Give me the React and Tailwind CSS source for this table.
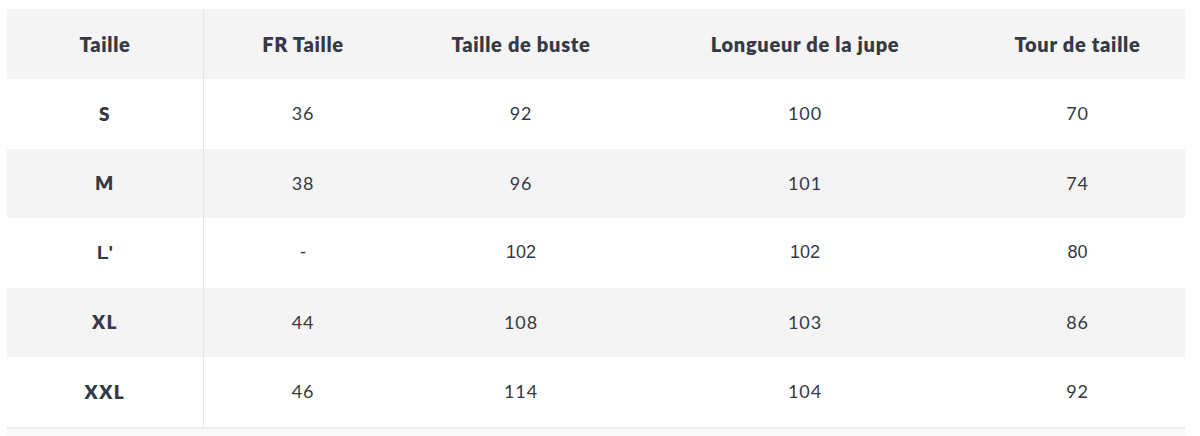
const columns = ["Taille", "FR Taille", "Taille de buste", "Longueur de la jupe", "Tour de taille"];

const rows = [
  { size: "S", values: ["36", "92", "100", "70"] },
  { size: "M", values: ["38", "96", "101", "74"] },
  { size: "L'", values: ["-", "102", "102", "80"], plain: true },
  { size: "XL", values: ["44", "108", "103", "86"] },
  { size: "XXL", values: ["46", "114", "104", "92"] },
];

const grid = "grid grid-cols-[197px_198px_238px_330px_215px]";

const App = () => {
  return (
    <div className="w-[1200px] h-[436px] bg-white pt-[9px] text-[#343945] font-['Lato',sans-serif]">
      <div className="ml-[7px] w-[1178px] border-b-2 border-[#ececec]">
        {/* Header */}
        <div className={`${grid} h-[70px] bg-[#f4f4f4]`}>
          {columns.map((col, i) => (
            <div
              key={col}
              className={`flex items-center justify-center text-[20px] font-extrabold tracking-[0.035em] ${
                i === 0 ? "border-r border-[#e4e4e4]" : ""
              }`}
            >
              {col}
            </div>
          ))}
        </div>

        {/* Rows */}
        {rows.map((row, r) => (
          <div
            key={row.size}
            className={`${grid} h-[69.5px] ${r % 2 === 1 ? "bg-[#f4f4f4]" : "bg-white"} ${
              row.plain ? "font-['Liberation_Sans',sans-serif]" : ""
            }`}
          >
            <div
              className={`flex items-center justify-center border-r border-[#e4e4e4] text-[19px] font-extrabold ${
                row.plain ? "" : "tracking-[0.08em]"
              }`}
            >
              {row.size}
            </div>
            {row.values.map((v, i) => (
              <div
                key={i}
                className={`flex items-center justify-center text-[18px] ${row.plain ? "" : "tracking-[0.05em]"}`}
              >
                {v}
              </div>
            ))}
          </div>
        ))}
      </div>
      <div className="ml-[7px] w-[1178px] h-[8px] bg-[#f9f9f9]" />
    </div>
  );
};

export default App;
